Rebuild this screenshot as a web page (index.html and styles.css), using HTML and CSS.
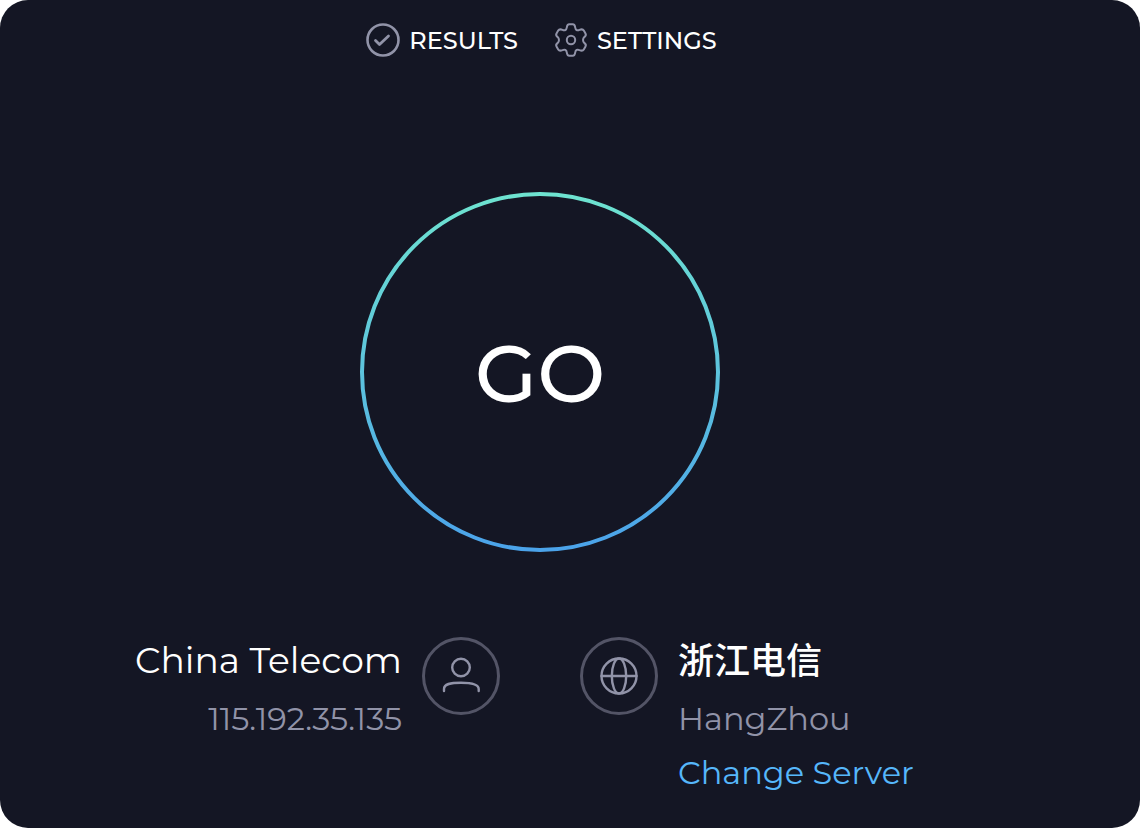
FILE: index.html
```html
<!DOCTYPE html>
<html lang="en">
<head>
<meta charset="utf-8">
<meta name="viewport" content="width=device-width, initial-scale=1">
<title>Speed test</title>
<link rel="stylesheet" href="styles.css">
</head>
<body>
<div class="window">
  <nav class="nav">
    <button class="nav-item" type="button">
      <svg class="nav-icon" viewBox="0 0 34 34" aria-hidden="true">
        <circle cx="17" cy="17" r="15.5" stroke-width="2.6"/>
        <path d="M9.500 17.500l4 4 9-8.500" stroke-width="2.8"/>
      </svg>
      <span class="nav-label">RESULTS</span>
    </button>
    <button class="nav-item" type="button">
      <svg class="nav-icon" viewBox="0 0 34 34" aria-hidden="true">
        <path stroke-width="2" d="M12.800 4.500Q13.200 1.200 15.300 1.200H18.700Q20.800 1.200 21.200 4.500C21.500 7 23.300 7.900 25.500 6.900Q28.600 5.600 29.800 7.600L31.500 10.500Q32.600 12.400 30.300 14.100C28.600 15.600 28.600 18.400 30.300 19.900Q32.600 21.600 31.500 23.500L29.800 26.400Q28.600 28.400 25.500 27.100C23.300 26.100 21.500 27 21.200 29.500Q20.800 32.800 18.700 32.800H15.300Q13.200 32.800 12.800 29.500C12.500 27 10.700 26.100 8.500 27.100Q5.400 28.400 4.200 26.400L2.500 23.500Q1.400 21.600 3.700 19.900C5.400 18.400 5.400 15.600 3.700 14.100Q1.400 12.400 2.500 10.500L4.200 7.600Q5.400 5.600 8.500 6.900C10.700 7.900 12.500 7 12.800 4.500Z"/>
        <circle cx="17" cy="17" r="4.200" stroke-width="2"/>
      </svg>
      <span class="nav-label">SETTINGS</span>
    </button>
  </nav>

  <main class="stage">
    <button class="go" type="button">
      <svg class="go-ring" viewBox="0 0 360 360" aria-hidden="true">
        <defs>
          <linearGradient id="ring" x1="0" y1="0" x2="0" y2="1">
            <stop offset="0" stop-color="#6ee3d0"/>
            <stop offset="1" stop-color="#4ba3ea"/>
          </linearGradient>
        </defs>
        <circle cx="180" cy="180" r="178" fill="none" stroke="url(#ring)" stroke-width="4"/>
      </svg>
      <span class="go-label">GO</span>
    </button>
  </main>

  <footer class="connection">
    <section class="party client">
      <div class="details">
        <div class="name">China Telecom</div>
        <div class="meta">115.192.35.135</div>
      </div>
      <svg class="badge" viewBox="0 0 78 78" aria-hidden="true">
        <circle class="badge-ring" cx="39" cy="39" r="37.500"/>
        <circle cx="39" cy="30.500" r="8.800"/>
        <path d="M22 54V52C22 47 28 45.700 39 45.700S56.700 47 56.700 52V54"/>
      </svg>
    </section>
    <section class="party server">
      <svg class="badge" viewBox="0 0 78 78" aria-hidden="true">
        <circle class="badge-ring" cx="39" cy="39" r="37.500"/>
        <circle cx="39" cy="39" r="17.500"/>
        <ellipse cx="39" cy="39" rx="7.200" ry="17.500"/>
        <path d="M21.500 39H56.500"/>
      </svg>
      <div class="details">
        <div class="name name-cjk" lang="zh-CN">浙江电信</div>
        <div class="meta">HangZhou</div>
        <a class="change" href="#servers">Change Server</a>
      </div>
    </section>
  </footer>
</div>
</body>
</html>
```
FILE: styles.css
```css
* {
  box-sizing: border-box;
}

body {
  margin: 0;
  background: #fff;
  color: #fff;
  font-family: Montserrat, Inter, "Noto Sans CJK SC", sans-serif;
}

.window {
  display: flex;
  flex-direction: column;
  min-height: 100vh;
  padding: 20px 60px 27px 0;
  border-radius: 28px;
  background: #141624;
}

.nav {
  display: flex;
  justify-content: center;
  gap: 36px;
  padding-left: 3px;
}

.nav-item {
  display: flex;
  align-items: center;
  gap: 9px;
  padding: 0;
  border: 0;
  background: none;
  color: inherit;
  font: 500 24px/38px Montserrat, Inter, sans-serif;
  cursor: pointer;
}

.nav-label {
  padding-top: 2px;
}

.nav-icon {
  width: 34px;
  height: 34px;
  fill: none;
  stroke: #9193a8;
  stroke-linecap: round;
  stroke-linejoin: round;
}

.stage {
  display: flex;
  flex: 1;
  align-items: center;
  justify-content: center;
  padding-top: 47px;
}

.go {
  display: grid;
  place-items: center;
  padding: 0;
  border: 0;
  border-radius: 50%;
  background: none;
  color: inherit;
  font: 500 81px/96px Montserrat, Inter, sans-serif;
  cursor: pointer;
}

.go-ring,
.go-label {
  grid-area: 1 / 1;
}

.go-ring {
  width: 360px;
  height: 360px;
}

.go-label {
  padding-top: 2px;
}

.connection {
  display: grid;
  grid-template-columns: 1fr 1fr;
  gap: 80px;
}

.party {
  display: flex;
  align-items: flex-start;
  gap: 20px;
}

.client {
  justify-content: flex-end;
  text-align: right;
}

.badge {
  flex: none;
  width: 78px;
  height: 78px;
  fill: none;
  stroke: #9193a8;
  stroke-width: 2.4;
  stroke-linecap: round;
}

.badge-ring {
  stroke: #535466;
  stroke-width: 3;
}

.name {
  padding-bottom: 2px;
  font-size: 36px;
  line-height: 46px;
}

.name-cjk {
  padding-bottom: 6px;
  font-family: "Noto Sans CJK SC", sans-serif;
  font-weight: 500;
  line-height: 42px;
}

.meta {
  margin-top: 8px;
  color: #9193a8;
  font-size: 32px;
  line-height: 52px;
}

.change {
  display: block;
  color: #56b7fb;
  font-size: 32px;
  line-height: 56px;
  text-decoration: none;
}
```
